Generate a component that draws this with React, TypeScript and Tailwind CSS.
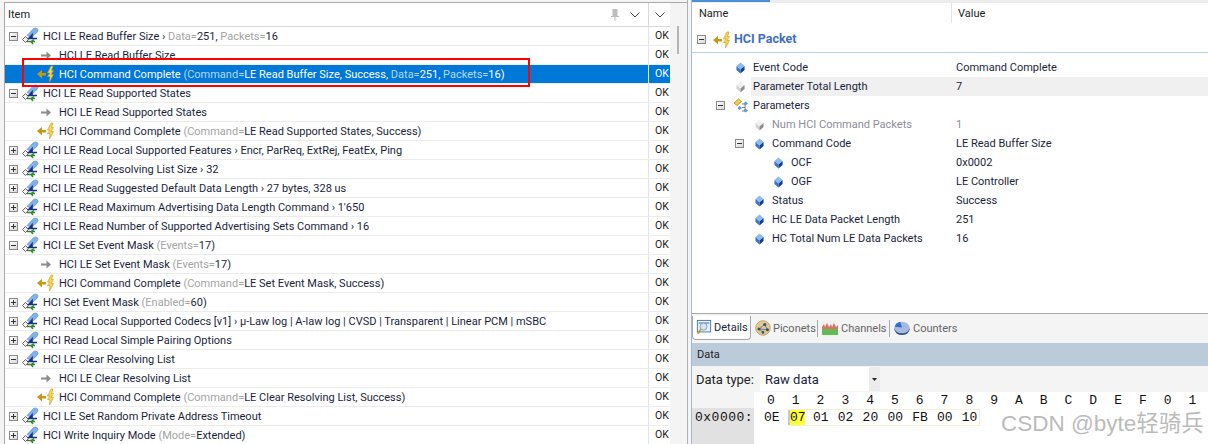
import React from "react";

const Minus = () => (
  <span className="w-[9px] h-[9px] border border-[#8a8a8a] bg-gradient-to-br from-white to-[#d8d8d8] flex items-center justify-center shrink-0">
    <span className="w-[5px] h-px bg-[#333]" />
  </span>
);
const Plus = () => (
  <span className="w-[9px] h-[9px] border border-[#8a8a8a] bg-gradient-to-br from-white to-[#d8d8d8] relative shrink-0">
    <span className="absolute left-[1px] top-[3px] w-[5px] h-px bg-[#333]" />
    <span className="absolute left-[3px] top-[1px] w-px h-[5px] bg-[#333]" />
  </span>
);
const Usb = () => (
  <svg width="18" height="18" viewBox="0 0 18 18" className="shrink-0">
    <path d="M6 8.5 L12.5 1.5 Q14.5 0.2 16.5 1.8 Q17.8 3.5 16 5.5 L10.5 10.5 Z" fill="#7fb2e8" stroke="#5a8fca" strokeWidth="0.6" />
    <path d="M1.5 12.5 L4.5 9.5 L7.5 12.5 L4.5 15.5 Z" fill="#f2f2f2" stroke="#555" strokeWidth="0.9" />
    <path d="M6.5 11.5 H16 M11 8 L8 11.5 L11 11.5Z" stroke="#1c2f8c" strokeWidth="1.6" fill="#1c2f8c" />
    <path d="M6 14.5 H14 M10 14.5 L13 12.5 M10 14.5 L12 17" stroke="#2f8a2f" strokeWidth="1.5" fill="none" />
  </svg>
);
const Arrow = () => (
  <svg width="10" height="9" viewBox="0 0 10 9" className="shrink-0">
    <path d="M0 3.5 H5.5 V0.5 L10 4.5 L5.5 8.5 V5.5 H0 Z" fill="#8c8c8c" />
  </svg>
);
const Bolt = () => (
  <svg width="18" height="18" viewBox="0 0 18 18" className="shrink-0">
    <path d="M0 9 L5 5 V8 H9 V10.5 H5 V13.5 Z" fill="#c9980e" />
    <path d="M14 1 L10.5 8 L13 8 L10.5 11.5 L13 11.5 L12.5 17 L16.5 9.5 L14 9.5 L16.5 5.5 L14.5 5.5 L16 1 Z" fill="#f6d65a" stroke="#c9980e" strokeWidth="0.6" />
  </svg>
);
const Cube = ({ gray = false }: { gray?: boolean }) => (
  <svg width="9" height="12" viewBox="0 0 10 12" preserveAspectRatio="none" className="shrink-0">
    <path d="M5 0.5 L9.5 4 L5 7.5 L0.5 4 Z" fill={gray ? "#f0f0f0" : "#8bbcf0"} />
    <path d="M0.5 4 L5 7.5 V11.5 L0.5 8 Z" fill={gray ? "#d4d4d4" : "#3d74c8"} />
    <path d="M9.5 4 L5 7.5 V11.5 L9.5 8 Z" fill={gray ? "#8e8e8e" : "#123e9a"} />
  </svg>
);
const ParamIcon = () => (
  <svg width="16" height="16" viewBox="0 0 16 16" className="shrink-0">
    <path d="M1 5 L5.5 1 L8.5 3.5 L4 7.5 Z" fill="#f2cf4e" stroke="#b38c12" strokeWidth="0.8" />
    <path d="M9 6 H12 V13 H9 M12 9.5 H9" stroke="#555" strokeWidth="0.7" fill="none" />
    <path d="M12.5 3.5 L15 5.5 L12.5 7.5 L10.5 5.5 Z M6.5 8 L9 10 L6.5 12 L4.5 10Z M12.5 10.5 L15 12.5 L12.5 14.5 L10.5 12.5 Z" fill="#5c97e0" />
  </svg>
);

type Seg = [string, "n" | "g"];
type Row = { k: "p" | "o" | "c"; open?: boolean; seg: Seg[]; sel?: boolean };
const t = (s: string): Seg => [s, "n"];
const g = (s: string): Seg => [s, "g"];
const cc = (name: string): Seg[] => [t("HCI Command Complete "), g("("), g("Command="), t(name + ", Success)")];

const rows: Row[] = [
  { k: "p", open: true, seg: [t("HCI LE Read Buffer Size › "), g("Data="), t("251, "), g("Packets="), t("16")] },
  { k: "o", seg: [t("HCI LE Read Buffer Size")] },
  { k: "c", sel: true, seg: [t("HCI Command Complete "), g("("), g("Command="), t("LE Read Buffer Size, Success, "), g("Data="), t("251, "), g("Packets="), t("16)")] },
  { k: "p", open: true, seg: [t("HCI LE Read Supported States")] },
  { k: "o", seg: [t("HCI LE Read Supported States")] },
  { k: "c", seg: cc("LE Read Supported States") },
  { k: "p", seg: [t("HCI LE Read Local Supported Features › Encr, ParReq, ExtRej, FeatEx, Ping")] },
  { k: "p", seg: [t("HCI LE Read Resolving List Size › 32")] },
  { k: "p", seg: [t("HCI LE Read Suggested Default Data Length › 27 bytes, 328 us")] },
  { k: "p", seg: [t("HCI LE Read Maximum Advertising Data Length Command › 1'650")] },
  { k: "p", seg: [t("HCI LE Read Number of Supported Advertising Sets Command › 16")] },
  { k: "p", open: true, seg: [t("HCI LE Set Event Mask "), g("("), g("Events="), t("17)")] },
  { k: "o", seg: [t("HCI LE Set Event Mask "), g("("), g("Events="), t("17)")] },
  { k: "c", seg: cc("LE Set Event Mask") },
  { k: "p", seg: [t("HCI Set Event Mask "), g("("), g("Enabled="), t("60)")] },
  { k: "p", seg: [t("HCI Read Local Supported Codecs [v1] › µ-Law log | A-law log | CVSD | Transparent | Linear PCM | mSBC")] },
  { k: "p", seg: [t("HCI Read Local Simple Pairing Options")] },
  { k: "p", open: true, seg: [t("HCI LE Clear Resolving List")] },
  { k: "o", seg: [t("HCI LE Clear Resolving List")] },
  { k: "c", seg: cc("LE Clear Resolving List") },
  { k: "p", seg: [t("HCI LE Set Random Private Address Timeout")] },
  { k: "p", seg: [t("HCI Write Inquiry Mode "), g("("), g("Mode="), t("Extended)")] },
];

const Segs = ({ r }: { r: Row }) => (
  <>
    {r.seg.map((s, i) => (
      <span key={i} className={s[1] === "g" ? (r.sel ? "text-[#b9d7f2]" : "text-[#a4a4a4]") : r.sel ? "text-white" : ""}>{s[0]}</span>
    ))}
  </>
);

const ListRow = ({ r }: { r: Row }) => (
  <div className={`h-[19px] flex items-center border-b border-[#ececec] overflow-hidden whitespace-nowrap shrink-0 ${r.sel ? "bg-[#0078d7] text-white" : ""}`}>
    <div className="flex-1 min-w-0 flex items-center">
      {r.k === "p" ? (
        <>
          <span className="ml-[4px] flex">{r.open ? <Minus /> : <Plus />}</span>
          <span className="ml-[3px] flex"><Usb /></span>
          <span className="ml-[4px] text-[#1b1f3b]"><Segs r={r} /></span>
        </>
      ) : r.k === "o" ? (
        <>
          <span className="w-[36px] shrink-0" />
          <Arrow />
          <span className="ml-[8px] text-[#1b1f3b]"><Segs r={r} /></span>
        </>
      ) : (
        <>
          <span className="w-[32px] shrink-0" />
          <Bolt />
          <span className={`ml-[4px] ${r.sel ? "" : "text-[#1b1f3b]"}`}><Segs r={r} /></span>
        </>
      )}
    </div>
    <div className="w-[22px] shrink-0 pl-[6px] border-l border-[#e4e4e4] h-full flex items-center text-[10.5px]">OK</div>
  </div>
);

const PropRow = ({ indent, box, icon, name, value, dim, hl }: { indent: number; box?: boolean; icon: React.ReactNode; name: string; value: string; dim?: boolean; hl?: boolean }) => (
  <div className="h-[19px] flex items-center whitespace-nowrap shrink-0">
    <div className="flex items-center w-[260px] shrink-0 h-full" style={{ paddingLeft: indent }}>
      <span className="w-[10px] shrink-0 flex">{box && <Minus />}</span>
      <span className="w-[17px] ml-[6px] flex justify-center shrink-0">{icon}</span>
      <span className={`ml-[2px] pl-[2px] flex-1 h-full flex items-center ${dim ? "text-[#8d8d99]" : "text-[#1b1f3b]"} ${hl ? "bg-[#f0f0f0]" : ""}`}>{name}</span>
    </div>
    <span className={`pl-[4px] flex-1 h-full flex items-center ${dim ? "text-[#8d8d99]" : "text-[#1b1f3b]"} ${hl ? "bg-[#f0f0f0]" : ""}`}>{value}</span>
  </div>
);

const DetailsIcon = () => (
  <svg width="16" height="17" viewBox="0 0 18 18" className="shrink-0">
    <rect x="1.5" y="1" width="15" height="13" fill="#eaf3fb" stroke="#3f6e9e" />
    <rect x="3" y="3" width="12" height="2" fill="#7fa8d0" />
    <circle cx="8.5" cy="8" r="4" fill="#cfe4f5" stroke="#8a9aa8" />
    <path d="M5.5 11 L2 16" stroke="#c89a3c" strokeWidth="2.2" />
  </svg>
);
const PiconetIcon = () => (
  <svg width="16" height="16" viewBox="0 0 18 18" className="shrink-0">
    <circle cx="9" cy="9" r="8.2" fill="#e2c98e" stroke="#b9a06a" />
    <path d="M4.5 10 L11 5 L14 11 L4.5 10 M9 14 L4.5 10" stroke="#46618a" strokeWidth="0.8" fill="none" />
    <circle cx="4.5" cy="10" r="1.7" fill="#2c4f86" /><circle cx="11" cy="5" r="1.7" fill="#2c4f86" /><circle cx="14" cy="11" r="1.7" fill="#2c4f86" /><circle cx="9" cy="14" r="1.5" fill="#2c4f86" />
  </svg>
);
const ChannelsIcon = () => (
  <svg width="16" height="14" viewBox="0 0 16 14" className="shrink-0">
    <rect x="0" y="0" width="16" height="14" fill="#f1f1f1" />
    <path d="M0 13 V6 L2 3 L3 6 L5 2 L7 6 L9 3 L10 6 L12 2 L14 6 L16 4 V13 Z" fill="#d9746a" />
    <rect x="0" y="8" width="16" height="6" fill="#62bb55" />
  </svg>
);
const CountersIcon = () => (
  <svg width="16" height="16" viewBox="0 0 18 17" className="shrink-0">
    <ellipse cx="9" cy="10" rx="8.5" ry="6.5" fill="#2f4f9e" />
    <ellipse cx="9" cy="8" rx="8.5" ry="6.5" fill="#a9b9de" />
    <path d="M9 8 L1 7 Q2 2.5 7 1.5 Z" fill="#2a6fd8" />
  </svg>
);

const hexHead = ["0", "1", "2", "3", "4", "5", "6", "7", "8", "9", "A", "B", "C", "D", "E", "F", "0", "1"];
const hexVals = ["07", "01", "02", "20", "00", "FB", "00", "10"];

export default function App() {
  return (
    <div className="relative w-[1208px] h-[444px] overflow-hidden bg-[#f4f4f4] flex text-[11px] leading-none text-[#1b1f3b]" style={{ fontFamily: 'Roboto, "Liberation Sans", sans-serif' }}>
      {/* left */}
      <div className="w-[688px] shrink-0 flex flex-col pt-[2px] pl-[4px] border-r border-[#b0b0b0]">
        <div className="flex flex-1 min-h-0 border-t border-[#a8a8a8]">
          <div className="w-[666px] bg-white border-l border-[#a8a8a8] flex flex-col overflow-hidden text-[#1a1a1a]">
            <div className="h-[24px] shrink-0 flex items-center border-b border-[#d8d8d8]">
              <span className="flex-1 pl-[3px] text-[#222]">Item</span>
              <svg width="10" height="14" viewBox="0 0 10 14" className="mr-[10px]"><path d="M2.5 1 H7.5 V8 H9 V9 H5.5 V13 H4.5 V9 H1 V8 H2.5 Z" fill="#bdbdbd" /></svg>
              <svg width="10" height="6" viewBox="0 0 10 6" className="mr-[8px]"><path d="M0.5 0.5 L5 5 L9.5 0.5" stroke="#444" fill="none" /></svg>
              <div className="w-[22px] h-full border-l border-[#d8d8d8] flex items-center justify-center">
                <svg width="10" height="6" viewBox="0 0 10 6"><path d="M0.5 0.5 L5 5 L9.5 0.5" stroke="#444" fill="none" /></svg>
              </div>
            </div>
            {rows.map((r, i) => <ListRow key={i} r={r} />)}
          </div>
          <div className="flex-1 relative">
            <div className="absolute left-[7px] top-[23px] w-[2px] h-[28px] bg-[#b4b4b4]" />
          </div>
        </div>
      </div>
      <div className="w-[3px] shrink-0" />
      {/* right */}
      <div className="flex-1 min-w-0 flex flex-col border-l border-[#a8b8d0]">
        <div className="h-[314px] shrink-0 flex flex-col border-b border-[#a8a8a8] bg-white">
          <div className="h-[3px] shrink-0 bg-[#ececec]"><div className="w-[78px] h-[2px] bg-[#4a90d9]" /></div>
          <div className="h-[24px] shrink-0 flex items-center pb-[4px]">
            <span className="pl-[7px] w-[260px] h-[20px] flex items-center border-r border-[#e4e4e4] text-[#222]">Name</span>
            <span className="pl-[6px] text-[#222]">Value</span>
          </div>
          <div className="h-[26px] shrink-0 flex items-center border-b border-[#b7d0ee]">
            <span className="ml-[5px] flex"><Minus /></span>
            <span className="ml-[7px] flex"><Bolt /></span>
            <span className="ml-[3px] text-[12.5px] font-bold text-[#3f6fbf]">HCI Packet</span>
          </div>
          <div className="pt-[5px] flex flex-col">
            <PropRow indent={24} icon={<Cube />} name="Event Code" value="Command Complete" />
            <PropRow indent={24} icon={<Cube gray />} name="Parameter Total Length" value="7" hl />
            <PropRow indent={24} box icon={<ParamIcon />} name="Parameters" value="" />
            <PropRow indent={43} icon={<Cube gray />} name="Num HCI Command Packets" value="1" dim />
            <PropRow indent={43} box icon={<Cube />} name="Command Code" value="LE Read Buffer Size" />
            <PropRow indent={62} icon={<Cube />} name="OCF" value="0x0002" />
            <PropRow indent={62} icon={<Cube />} name="OGF" value="LE Controller" />
            <PropRow indent={43} icon={<Cube />} name="Status" value="Success" />
            <PropRow indent={43} icon={<Cube />} name="HC LE Data Packet Length" value="251" />
            <PropRow indent={43} icon={<Cube />} name="HC Total Num LE Data Packets" value="16" />
          </div>
        </div>
        {/* tabs */}
        <div className="h-[28px] shrink-0 flex items-center text-[#666]">
          <div className="w-[59px] h-[24px] flex items-center gap-[2px] pl-[3px] bg-white border border-[#a8a8a8] border-t-0 rounded-b text-[#1b1f3b]"><DetailsIcon />Details</div>
          <div className="w-[67px] flex items-center gap-[2px] pl-[4px] border-r border-[#a8a8a8] h-[17px]"><PiconetIcon />Piconets</div>
          <div className="w-[72px] flex items-center gap-[3px] pl-[4px] border-r border-[#a8a8a8] h-[17px]"><ChannelsIcon />Channels</div>
          <div className="flex items-center gap-[3px] pl-[4px]"><CountersIcon />Counters</div>
        </div>
        {/* data panel */}
        <div className="flex-1 min-h-0 flex flex-col mt-[1px]">
          <div className="h-[23px] shrink-0 bg-[#bccbda] flex items-center pl-[5px] text-[#222]">Data</div>
          <div className="h-[26px] shrink-0 flex items-center">
            <span className="pl-[4px] w-[68px] text-[#222] text-[13px]">Data type:</span>
            <div className="w-[120px] h-[24px] bg-white flex items-center pl-[5px] text-[13px] relative">
              Raw data
              <span className="absolute right-0 top-0 w-[11px] h-full bg-[#ececec] flex items-center justify-center">
                <svg width="5" height="3" viewBox="0 0 5 3"><path d="M0 0 H5 L2.5 3 Z" fill="#222" /></svg>
              </span>
            </div>
          </div>
          <div className="flex-1 min-h-0 flex text-[13px] text-[#111] leading-none bg-white" style={{ fontFamily: '"Liberation Mono", monospace' }}>
            <div className="w-[62px] shrink-0 flex flex-col">
              <div className="h-[16px] bg-[#f4f4f4]" />
              <div className="flex-1 bg-[#e1e1e1] pl-[3px] pt-[3px] tracking-[0.5px]">0x0000:</div>
            </div>
            <div className="flex-1 flex flex-col">
              <div className="h-[17px] flex items-center pl-[13px]">
                {hexHead.map((h, i) => <span key={i} className="w-[24.8px] shrink-0">{h}</span>)}
              </div>
              <div className="h-[17px] flex items-center pl-[5px]">
                <span className="w-[29px] shrink-0 pl-[5px]">0E</span>
                <div className="flex border border-[#f3f3cf] border-l-0 h-[17px]">
                  {hexVals.map((h, i) =>
                    i === 0 ? (
                      <span key={i} className="w-[17px] h-full shrink-0 flex items-center bg-[#ffff33] border-l-2 border-[#c8c8c8]">{h}</span>
                    ) : (
                      <span key={i} className="w-[24.8px] h-full shrink-0 pl-[8px] flex items-center">{h}</span>
                    )
                  )}
                </div>
              </div>
            </div>
          </div>
        </div>
      </div>
      {/* overlays */}
      <div className="absolute left-[22px] top-[58px] w-[508px] h-[29px] border-2 border-[#ff0000] pointer-events-none" />
      <div className="absolute left-[1001px] top-[413px] text-[22.5px] leading-none text-[#8f8f8f] opacity-60 whitespace-nowrap" style={{ fontFamily: '"Liberation Sans", "Noto Sans CJK SC", sans-serif' }}>CSDN @byte轻骑兵</div>
    </div>
  );
}
